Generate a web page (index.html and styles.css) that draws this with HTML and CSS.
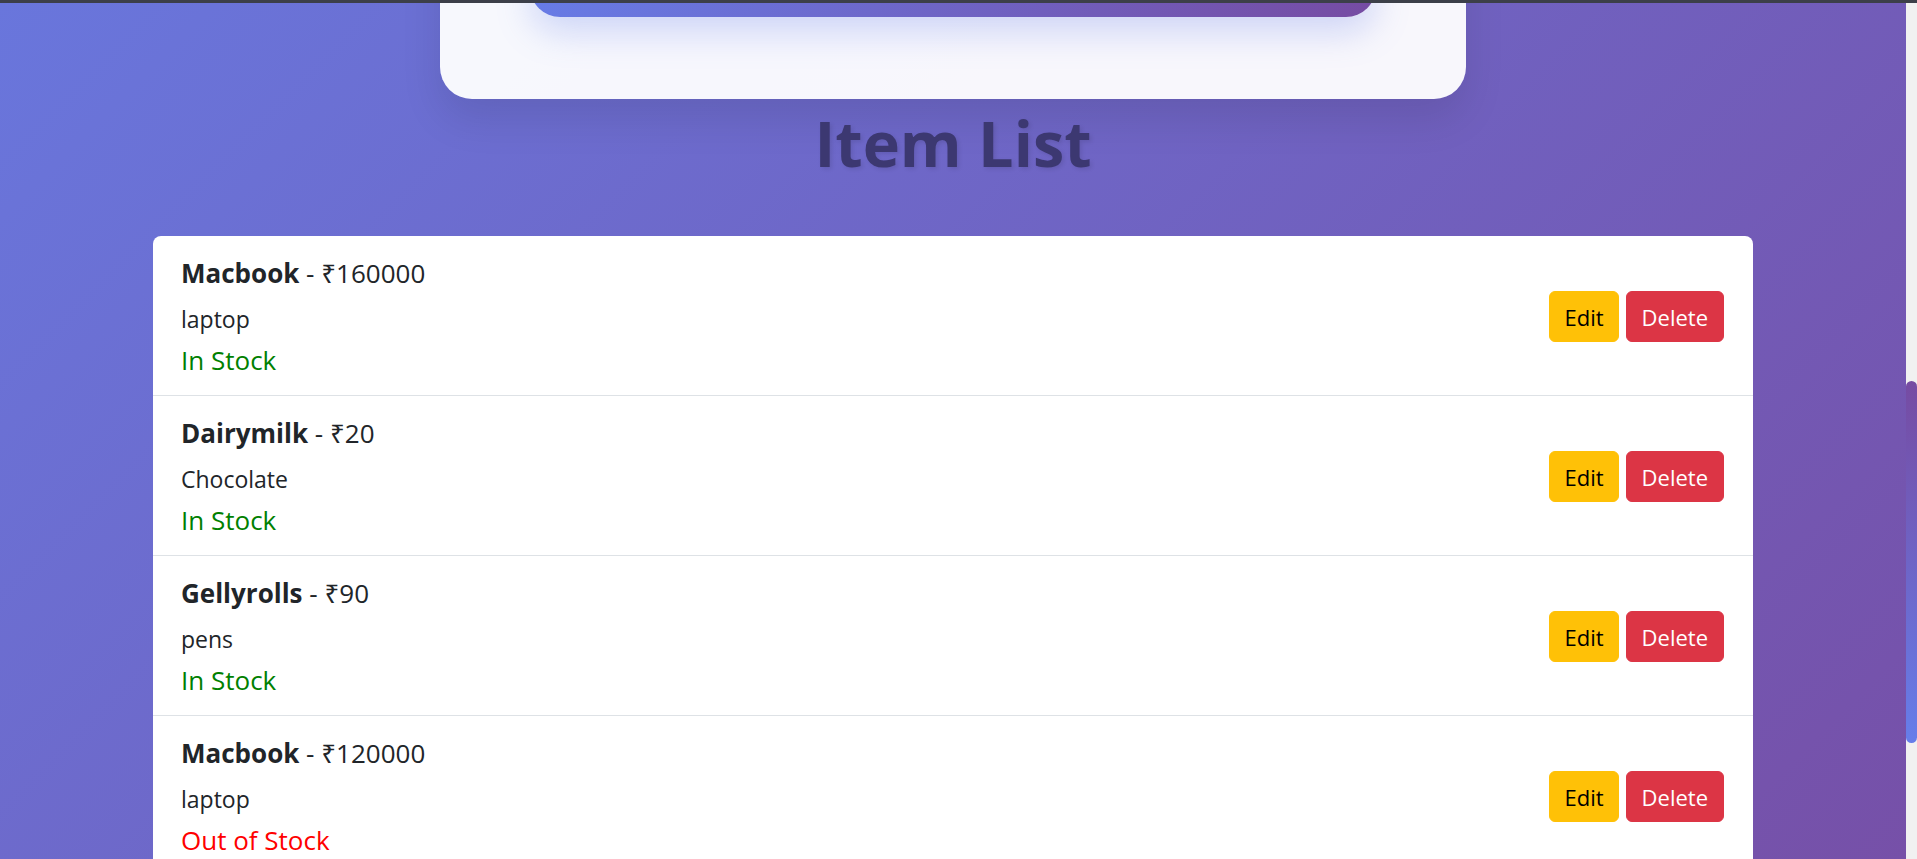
FILE: index.html
```html
<!DOCTYPE html>
<html lang="en">
<head>
<meta charset="utf-8">
<title>Item List</title>
<link rel="stylesheet" href="styles.css">
</head>
<body>
<div class="topbar"></div>
<div class="viewport">
  <main class="page">
    <section class="form-card">
      <div class="form-submit"></div>
    </section>
    <h1 class="page-title">Item List</h1>
    <ul class="item-list">
      <li class="item">
        <div class="item-info">
          <div class="item-head"><strong>Macbook</strong> - ₹160000</div>
          <div class="item-desc">laptop</div>
          <div class="item-status in">In Stock</div>
        </div>
        <div class="item-actions">
          <button class="btn btn-edit">Edit</button>
          <button class="btn btn-delete">Delete</button>
        </div>
      </li>
      <li class="item">
        <div class="item-info">
          <div class="item-head"><strong>Dairymilk</strong> - ₹20</div>
          <div class="item-desc">Chocolate</div>
          <div class="item-status in">In Stock</div>
        </div>
        <div class="item-actions">
          <button class="btn btn-edit">Edit</button>
          <button class="btn btn-delete">Delete</button>
        </div>
      </li>
      <li class="item">
        <div class="item-info">
          <div class="item-head"><strong>Gellyrolls</strong> - ₹90</div>
          <div class="item-desc">pens</div>
          <div class="item-status in">In Stock</div>
        </div>
        <div class="item-actions">
          <button class="btn btn-edit">Edit</button>
          <button class="btn btn-delete">Delete</button>
        </div>
      </li>
      <li class="item">
        <div class="item-info">
          <div class="item-head"><strong>Macbook</strong> - ₹120000</div>
          <div class="item-desc">laptop</div>
          <div class="item-status out">Out of Stock</div>
        </div>
        <div class="item-actions">
          <button class="btn btn-edit">Edit</button>
          <button class="btn btn-delete">Delete</button>
        </div>
      </li>
    </ul>
  </main>
  <div class="scrollbar"><div class="scroll-thumb"></div></div>
</div>
</body>
</html>
```
FILE: styles.css
```css
* { box-sizing: border-box; }
html, body { margin: 0; padding: 0; height: 100%; overflow: hidden; }
body {
  font-family: "Segoe UI", "Open Sans", "Noto Sans", "DejaVu Sans", sans-serif;
  color: #212529;
  background: #f1f1f1;
}
.topbar { height: 3px; background: #3c3f49; }
.viewport { display: flex; height: 856px; overflow: hidden; }
.page {
  flex: 1;
  display: flex;
  flex-direction: column;
  align-items: center;
  background: linear-gradient(135deg, #6976dc 0%, #7650a8 100%);
  overflow: hidden;
}
.form-card {
  width: 1026px;
  height: 196px;
  margin-top: -100px;
  flex-shrink: 0;
  background: rgba(255, 255, 255, 0.95);
  border-radius: 32px;
  box-shadow: 0 20px 40px rgba(0, 0, 0, 0.1);
  display: flex;
  justify-content: center;
}
.form-submit {
  width: 846px;
  height: 60px;
  margin-top: 54px;
  border-radius: 32px;
  background: linear-gradient(135deg, #667eea 0%, #764ba2 100%);
  box-shadow: 0 15px 35px rgba(102, 126, 234, 0.28);
}
.page-title {
  margin: 5px 0 0;
  font-size: 63px;
  line-height: 77px;
  font-weight: 700;
  color: #3c3871;
  text-shadow: 2px 2px 4px rgba(0, 0, 0, 0.1);
}
.item-list {
  list-style: none;
  margin: 55px 0 0;
  padding: 0;
  width: 1600px;
  background: #fff;
  border-radius: 8px;
  flex-shrink: 0;
}
.item {
  display: flex;
  align-items: center;
  justify-content: space-between;
  padding: 19px 29px 17px 28px;
  border-bottom: 1px solid #dee2e6;
}
.item-head { font-size: 26px; line-height: 36px; margin-bottom: 10px; }
.item-head strong { font-weight: 700; }
.item-desc { font-size: 23px; line-height: 36px; }
.item-status { font-size: 26px; line-height: 36px; margin-top: 5px; }
.item-status.in { color: #008000; }
.item-status.out { color: #ff0000; }
.item-actions { display: flex; gap: 7px; }
.btn {
  height: 51px;
  padding: 0 15px;
  font-family: inherit;
  font-size: 22px;
  border-radius: 6px;
  border: 1px solid transparent;
  cursor: pointer;
}
.btn-edit { background: #ffc107; border-color: #ffc107; color: #000; padding: 0 14px; }
.btn-delete { background: #dc3545; border-color: #dc3545; color: #fff; }
.scrollbar {
  width: 11px;
  flex-shrink: 0;
  background: #f1f1f1;
  padding-top: 378px;
}
.scroll-thumb {
  height: 362px;
  border-radius: 6px;
  background: linear-gradient(180deg, #764ba2 0%, #667eea 100%);
}
```
